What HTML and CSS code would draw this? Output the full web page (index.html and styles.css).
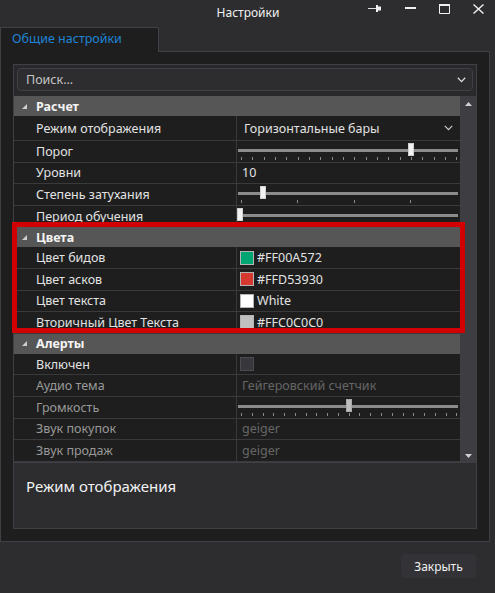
FILE: index.html
```html
<!DOCTYPE html>
<html lang="ru">
<head>
<meta charset="utf-8">
<title>Настройки</title>
<link rel="stylesheet" href="styles.css">
</head>
<body>
<div class="window">
  <header class="titlebar">
    <div class="title">Настройки</div>
    <div class="controls">
      <span class="ctl"><svg width="14" height="9" viewBox="0 0 14 9"><rect x="0" y="4" width="8" height="1" fill="#e0e0e0"/><rect x="8" y="1" width="2" height="7" fill="#f0f0f0"/><rect x="10" y="2.5" width="3" height="4" fill="#f0f0f0"/></svg></span>
      <span class="ctl"><svg width="11" height="3" viewBox="0 0 11 3"><rect x="0" y="0" width="11" height="2" fill="#f0f0f0"/></svg></span>
      <span class="ctl"><svg width="11" height="10" viewBox="0 0 11 10"><path d="M0.5 1 H10.5 V9.5 H0.5 Z" fill="none" stroke="#f0f0f0" stroke-width="1"/><rect x="0" y="0" width="11" height="2" fill="#f0f0f0"/></svg></span>
      <span class="ctl"><svg width="11" height="10" viewBox="0 0 11 10"><path d="M0.5 0.5 L10.5 9.5 M10.5 0.5 L0.5 9.5" stroke="#f0f0f0" stroke-width="1.4"/></svg></span>
    </div>
  </header>

  <div class="tabs">
    <div class="tab">Общие настройки</div>
    <div class="tab-fill"></div>
  </div>

  <div class="tabpanel">
    <div class="pg">
      <div class="search-wrap">
        <div class="search">
          <span>Поиск...</span>
          <svg class="chev" width="9" height="6" viewBox="0 0 9 6"><path d="M0.8 0.8 L4.5 4.6 L8.2 0.8" fill="none" stroke="#dcdcdc" stroke-width="1.3"/></svg>
        </div>
      </div>

      <div class="pg-body">
        <div class="pg-list">
          <div class="cat"><svg class="cat-arrow" width="5" height="5" viewBox="0 0 5 5"><polygon points="5,0 5,5 0,5" fill="#cfcfcf"/></svg><span>Расчет</span></div>
          <div class="row row-combo">
            <div class="name">Режим отображения</div>
            <div class="value combo"><span>Горизонтальные бары</span><svg class="chev" width="9" height="6" viewBox="0 0 9 6"><path d="M0.8 0.8 L4.5 4.6 L8.2 0.8" fill="none" stroke="#cfcfcf" stroke-width="1.2"/></svg></div>
          </div>
          <div class="row">
            <div class="name">Порог</div>
            <div class="value"><div class="slider"><div class="track"></div><div class="ticks ticks-fine"></div><div class="thumb" style="left:77.3%"></div></div></div>
          </div>
          <div class="row">
            <div class="name">Уровни</div>
            <div class="value text">10</div>
          </div>
          <div class="row">
            <div class="name">Степень затухания</div>
            <div class="value"><div class="slider"><div class="track"></div><div class="ticks ticks-wide"></div><div class="thumb" style="left:10%"></div></div></div>
          </div>
          <div class="row">
            <div class="name">Период обучения</div>
            <div class="value"><div class="slider"><div class="track"></div><div class="ticks ticks-mid"></div><div class="thumb" style="left:-0.5%"></div></div></div>
          </div>

          <div class="cat"><svg class="cat-arrow" width="5" height="5" viewBox="0 0 5 5"><polygon points="5,0 5,5 0,5" fill="#cfcfcf"/></svg><span>Цвета</span></div>
          <div class="row">
            <div class="name">Цвет бидов</div>
            <div class="value color"><span class="swatch" style="background:#00A572"></span><span>#FF00A572</span></div>
          </div>
          <div class="row">
            <div class="name">Цвет асков</div>
            <div class="value color"><span class="swatch" style="background:#D53930"></span><span>#FFD53930</span></div>
          </div>
          <div class="row">
            <div class="name">Цвет текста</div>
            <div class="value color"><span class="swatch" style="background:#FFFFFF"></span><span>White</span></div>
          </div>
          <div class="row">
            <div class="name">Вторичный Цвет Текста</div>
            <div class="value color"><span class="swatch" style="background:#C0C0C0"></span><span>#FFC0C0C0</span></div>
          </div>

          <div class="cat"><svg class="cat-arrow" width="5" height="5" viewBox="0 0 5 5"><polygon points="5,0 5,5 0,5" fill="#cfcfcf"/></svg><span>Алерты</span></div>
          <div class="row">
            <div class="name">Включен</div>
            <div class="value"><span class="checkbox"></span></div>
          </div>
          <div class="row disabled">
            <div class="name">Аудио тема</div>
            <div class="value text">Гейгеровский счетчик</div>
          </div>
          <div class="row disabled">
            <div class="name">Громкость</div>
            <div class="value"><div class="slider"><div class="track"></div><div class="ticks ticks-vol"></div><div class="thumb" style="left:49%"></div></div></div>
          </div>
          <div class="row disabled">
            <div class="name">Звук покупок</div>
            <div class="value text">geiger</div>
          </div>
          <div class="row disabled">
            <div class="name">Звук продаж</div>
            <div class="value text">geiger</div>
          </div>
        </div>
        <div class="scrollbar">
          <svg width="7" height="4" viewBox="0 0 7 4"><polygon points="0,4 3.5,0 7,4" fill="#d0d0d0"/></svg>
          <svg width="7" height="4" viewBox="0 0 7 4"><polygon points="0,0 7,0 3.5,4" fill="#d0d0d0"/></svg>
        </div>
      </div>

      <div class="desc">Режим отображения</div>
    </div>
  </div>

  <footer class="footer">
    <button class="btn">Закрыть</button>
  </footer>

  <div class="highlight"></div>
</div>
</body>
</html>
```

FILE: styles.css
```css
* { box-sizing: border-box; }

html, body {
  margin: 0;
  padding: 0;
}

body {
  background: #2d2d30;
  font-family: "Noto Sans", "Open Sans", sans-serif;
  color: #e2e2e2;
}

.window {
  position: relative;
  width: 495px;
  height: 593px;
  overflow: hidden;
  background: #2d2d30;
}

/* title bar */
.titlebar {
  height: 27px;
  display: grid;
  grid-template-columns: 1fr;
  position: relative;
}

.title {
  grid-row: 1;
  grid-column: 1;
  justify-self: center;
  align-self: center;
  font-size: 12px;
  color: #f1f1f1;
  padding-left: 1px;
  padding-bottom: 2px;
}

.controls {
  grid-row: 1;
  grid-column: 1;
  justify-self: end;
  align-self: start;
  display: flex;
  padding-right: 0;
}

.ctl {
  width: 34px;
  height: 17px;
  display: flex;
  align-items: center;
  justify-content: center;
}

.ctl:first-child { width: 36px; }

/* tabs */
.tabs {
  display: flex;
  height: 25px;
}

.tab {
  width: 159px;
  height: 25px;
  border: 1px solid #3f3f46;
  border-bottom: none;
  background: #1e1e1e;
  color: #1f84d6;
  font-size: 12.5px;
  line-height: 22px;
  padding-left: 11px;
}

.tab-fill {
  width: 331px;
  border-bottom: 1px solid #3f3f46;
}

.tabpanel {
  width: 490px;
  height: 490px;
  border: 1px solid #3f3f46;
  border-top: none;
  background: #1e1e1e;
  padding: 12px 12px 12px 12px;
}

/* property grid */
.pg {
  width: 464px;
  height: 465px;
  border: 1px solid #3f3f46;
  background: #29292c;
  display: flex;
  flex-direction: column;
}

.search-wrap {
  height: 31px;
  padding: 3px 3px 0 3px;
}

.search {
  height: 23px;
  border: 1px solid #3f3f46;
  border-radius: 4px;
  background: #2d2d30;
  display: flex;
  align-items: center;
  justify-content: space-between;
  padding: 0 6px 0 8px;
  font-size: 12.5px;
  color: #c4c4c4;
}

.pg-body {
  height: 366px;
  display: flex;
}

.pg-list {
  flex: 1;
  overflow: hidden;
  background: #1e1e1e;
}

.scrollbar {
  width: 16px;
  background: #3e3e42;
  display: flex;
  flex-direction: column;
  justify-content: space-between;
  align-items: center;
  padding: 6px 0 4px 1px;
}

.cat {
  height: 20px;
  background: #565656;
  display: flex;
  align-items: center;
  font-size: 12.5px;
  font-weight: bold;
  color: #f4f4f4;
}

.cat-arrow {
  margin-left: 8px;
  margin-right: 9px;
}

.row {
  height: 21.6px;
  display: grid;
  grid-template-columns: 223px 1fr;
  border-bottom: 1px solid #3a3a3c;
  font-size: 12.5px;
}

.row-combo { height: 25px; }

.name {
  border-right: 1px solid #3a3a3c;
  padding-left: 22px;
  display: flex;
  align-items: center;
  color: #e2e2e2;
  white-space: nowrap;
}

.value {
  display: flex;
  align-items: center;
  min-width: 0;
  white-space: nowrap;
}

.value.text { padding-left: 5px; }

.combo {
  justify-content: space-between;
  padding: 0 7px 0 7px;
}

.color { padding-left: 3px; gap: 3px; }

.swatch {
  width: 14px;
  height: 14px;
  border: 1px solid #b4b4b4;
}

.checkbox {
  width: 14px;
  height: 14px;
  margin-left: 3px;
  background: #38383c;
  border: 1px solid #4c4c50;
}

.disabled .name { color: #999999; }
.disabled .value { color: #666666; }

/* sliders */
.slider {
  position: relative;
  align-self: stretch;
  flex: 1;
  margin: 0 2px 0 1px;
  padding-top: 8px;
}

.track {
  height: 3px;
  background: #8c8c8c;
}

.ticks {
  height: 3px;
  margin: 5px 0 0 3px;
  width: 217px;
  background: repeating-linear-gradient(90deg, #8a8a8a 0 1px, transparent 1px var(--gap));
}

.ticks-fine { --gap: 11.33px; }
.ticks-wide { --gap: 56.4px; }
.ticks-mid { --gap: 18px; }
.ticks-vol { --gap: 10.77px; }

.thumb {
  position: absolute;
  top: 2px;
  width: 6px;
  height: 13px;
  background: #f2f2f2;
  border: 1px solid #d0d0d0;
}

.disabled .thumb {
  background: #bdbdbd;
  border-color: #a8a8a8;
}

.desc {
  flex: 1;
  border-top: 1px solid #3f3f46;
  background: #2d2d30;
  padding: 13px 0 0 12px;
  font-size: 15px;
  color: #f2f2f2;
}

/* footer */
.footer {
  display: flex;
  justify-content: flex-end;
  padding: 12px 19px 0 0;
}

.btn {
  width: 75px;
  height: 24px;
  border: none;
  border-radius: 4px;
  background: #333337;
  color: #f0f0f0;
  font-family: "Noto Sans", "Open Sans", sans-serif;
  font-size: 12px;
  padding: 0;
}

/* annotation box drawn over the grid */
.highlight {
  position: absolute;
  left: 12px;
  top: 222px;
  width: 453px;
  height: 111px;
  border: 5px solid #d20000;
  pointer-events: none;
}
```
